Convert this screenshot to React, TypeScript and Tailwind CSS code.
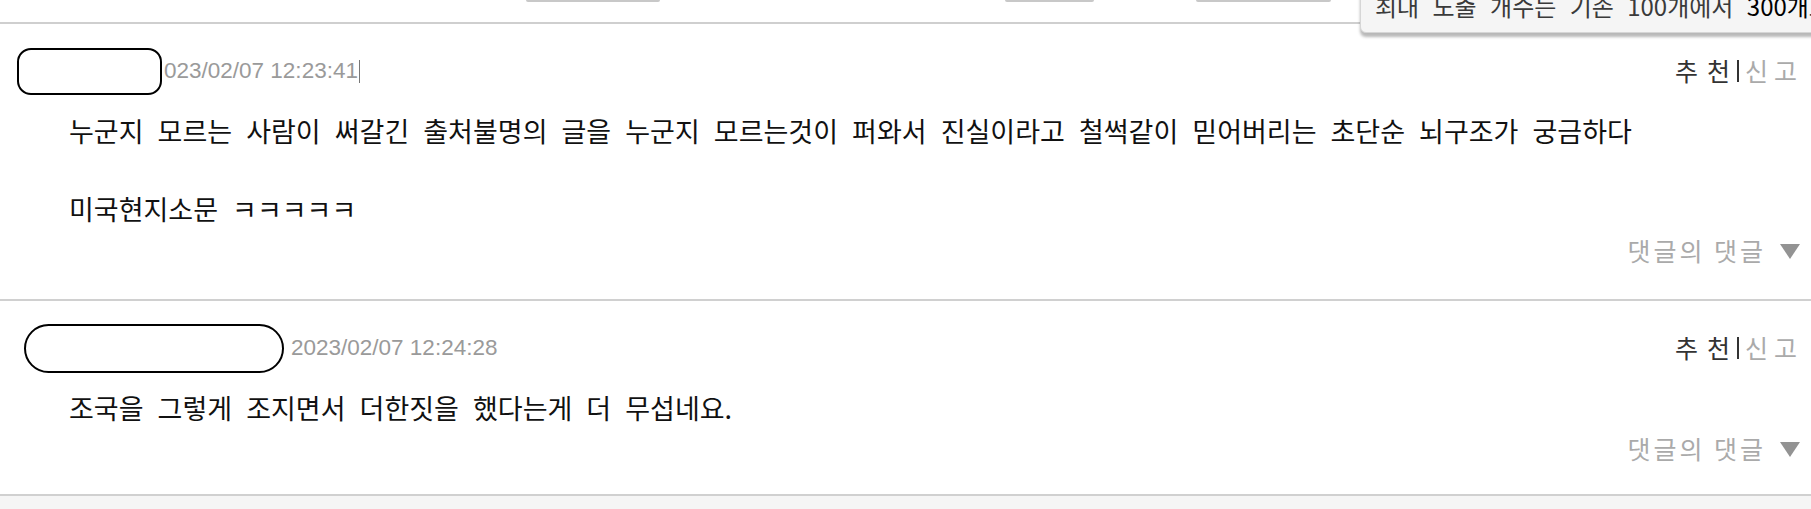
import type { ReactNode } from 'react'

const KR = "font-['Noto_Sans_CJK_KR',sans-serif]"

type CommentProps = {
  pillClass: string
  date: string
  dateGap: string
  caret?: boolean
  children: ReactNode
  replyClass: string
  bottomClass: string
}

const Comment = ({ pillClass, date, dateGap, caret, children, replyClass, bottomClass }: CommentProps) => (
  <div className={`border-b-2 border-[#d0d0d0] bg-white pt-[23px] ${bottomClass}`}>
    <div className="flex h-[48px] items-center justify-between pr-[14px]">
      <div className="flex items-center">
        <div className={`border-2 border-black bg-white ${pillClass}`} />
        <span className={`font-['Liberation_Sans',sans-serif] text-[22.5px] text-[#9a9a9a] ${dateGap}`}>{date}</span>
        {caret ? <span className="ml-[1px] h-[23px] w-px bg-[#777]" /> : null}
      </div>
      <div className={`flex items-center text-[25px] ${KR}`}>
        <span className="mr-[-9px] tracking-[9px] text-[#333]">추천</span>
        <span className="ml-[7px] mr-[6px] h-[22px] w-[2px] bg-[#333]" />
        <span className="mr-[-6px] tracking-[6px] text-[#aaa]">신고</span>
      </div>
    </div>
    <div className={`mt-[16px] pl-[69px] text-[27px] leading-[39px] text-[#111] [word-spacing:8px] ${KR}`}>
      {children}
    </div>
    <div className={`flex h-[30px] items-center justify-end pr-[11px] ${replyClass}`}>
      <span className={`mr-[-3px] text-[25px] tracking-[3px] text-[#aaa] ${KR}`}>댓글의 댓글</span>
      <svg width="20" height="15" viewBox="0 0 20 15" className="ml-[17px]">
        <polygon points="0,0 20,0 10,15" fill="#939393" />
      </svg>
    </div>
  </div>
)

export default function App() {
  return (
    <div className="relative min-h-screen overflow-hidden bg-[#f5f5f5]">
      <div className="flex h-[24px] items-start border-b-2 border-[#cfcfcf] bg-white">
        <div className="ml-[526px] h-[2px] w-[134px] rounded-b bg-[#c8c8c8]" />
        <div className="ml-[345px] h-[2px] w-[89px] rounded-b bg-[#c8c8c8]" />
        <div className="ml-[102px] h-[2px] w-[135px] rounded-b bg-[#c8c8c8]" />
      </div>

      <div className="absolute left-[1360px] top-[-20px] h-[53px] w-[600px] rounded-bl-[6px] border border-[#d6d6d6] bg-[#f5f5f5] pl-[14px] pt-[10px] shadow-[0_4px_3px_rgba(0,0,0,0.28)]">
        <p className={`whitespace-nowrap text-[24px] leading-[30px] text-[#3a3a3a] [word-spacing:8px] ${KR}`}>
          최대 노출 개수는 기존 100개에서 <span className="text-black">300개</span>로 늘었습니다
        </p>
      </div>

      <Comment
        pillClass="ml-[17px] h-[47px] w-[145px] rounded-[14px]"
        date="023/02/07 12:23:41"
        dateGap="ml-[2px]"
        caret
        replyClass="mt-[8px]"
        bottomClass="pb-[33px]"
      >
        <p>누군지 모르는 사람이 써갈긴 출처불명의 글을 누군지 모르는것이 퍼와서 진실이라고 철썩같이 믿어버리는 초단순 뇌구조가 궁금하다</p>
        <p>&nbsp;</p>
        <p>미국현지소문 ㅋㅋㅋㅋㅋ</p>
      </Comment>

      <Comment
        pillClass="ml-[24px] h-[49px] w-[260px] rounded-[25px]"
        date="2023/02/07 12:24:28"
        dateGap="ml-[7px]"
        replyClass="mt-[7px]"
        bottomClass="pb-[30px]"
      >
        <p>조국을 그렇게 조지면서 더한짓을 했다는게 더 무섭네요.</p>
      </Comment>
    </div>
  )
}
